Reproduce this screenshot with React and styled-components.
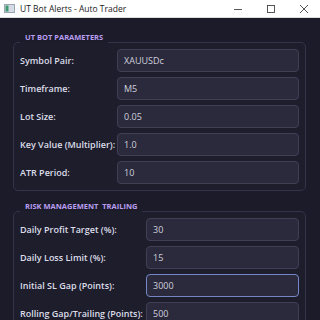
import React from 'react';
import styled, { createGlobalStyle } from 'styled-components';

const GlobalStyles = createGlobalStyle`
  html, body {
    margin: 0;
    padding: 0;
    background: #1c1b29;
  }
  body {
    font-family: 'Open Sans', 'Noto Sans', sans-serif;
    overflow: hidden;
  }
  * {
    box-sizing: border-box;
  }
`;

const Window = styled.div`
  width: 320px;
  height: 320px;
  display: flex;
  flex-direction: column;
  background: #1c1b29;
  overflow: hidden;
`;

const TitleBar = styled.div`
  flex: none;
  height: 18px;
  display: flex;
  align-items: center;
  padding-left: 4px;
  background: #ffffff;
  border-bottom: 1px solid #dcdcdc;
`;

const Title = styled.span`
  margin-left: 5px;
  font-size: 8.5px;
  color: #1b1b1b;
  white-space: nowrap;
`;

const Controls = styled.div`
  margin-left: auto;
  display: flex;
  height: 100%;
`;

const ControlButton = styled.div`
  width: 33px;
  display: flex;
  align-items: center;
  justify-content: center;
`;

const Body = styled.div`
  flex: 1;
  padding: 0 14px 0 13px;
`;

const Group = styled.fieldset`
  margin: ${(p) => p.$top}px 0 0 0;
  padding: 0 6px 6px 6px;
  border: 1px solid #34334a;
  border-radius: 5px;
  background: #1e1d2c;
`;

const Legend = styled.legend`
  padding: 0 5px 9px;
  font-size: 7.5px;
  line-height: 9px;
  font-weight: 700;
  color: #b99ef0;
  text-transform: uppercase;
  white-space: pre;
`;

const Rows = styled.div`
  margin-top: -2px;
  display: grid;
  grid-template-columns: ${(p) => p.$labelWidth}px 1fr;
  grid-auto-rows: 23px;
  column-gap: 4px;
  row-gap: 5px;
  align-items: center;
`;

const Label = styled.label`
  font-size: 9px;
  font-weight: 600;
  color: #dcdde8;
  white-space: nowrap;
`;

const Field = styled.input`
  width: 100%;
  height: 23px;
  padding: 0 6px;
  font-family: inherit;
  font-size: 9px;
  color: #cfd0dc;
  background: #2b2a3c;
  border: 1px solid ${(p) => (p.$focused ? '#7387c8' : '#403f56')};
  border-radius: 4px;
  outline: none;
`;

const utParams = [
  ['Symbol Pair:', 'XAUUSDc'],
  ['Timeframe:', 'M5'],
  ['Lot Size:', '0.05'],
  ['Key Value (Multiplier):', '1.0'],
  ['ATR Period:', '10'],
];

const riskParams = [
  ['Daily Profit Target (%):', '30'],
  ['Daily Loss Limit (%):', '15'],
  ['Initial SL Gap (Points):', '3000', true],
  ['Rolling Gap/Trailing (Points):', '500'],
];

const AppIcon = () => (
  <svg width="11" height="9" viewBox="0 0 11 9">
    <rect x="0.5" y="0.5" width="10" height="8" fill="#d5dbe2" stroke="#9aa6b2" />
    <rect x="1.5" y="1.5" width="3" height="6" fill="#3f9a74" />
  </svg>
);

const App = () => {
  return (
    <>
      <GlobalStyles />
      <Window>
        <TitleBar>
          <AppIcon />
          <Title>UT Bot Alerts - Auto Trader</Title>
          <Controls>
            <ControlButton>
              <svg width="10" height="10" viewBox="0 0 10 10">
                <path d="M1 5.5h8" stroke="#444" strokeWidth="0.9" />
              </svg>
            </ControlButton>
            <ControlButton>
              <svg width="10" height="10" viewBox="0 0 10 10">
                <rect x="1.5" y="1.5" width="7" height="7" fill="none" stroke="#444" strokeWidth="0.9" />
              </svg>
            </ControlButton>
            <ControlButton>
              <svg width="10" height="10" viewBox="0 0 10 10">
                <path d="M1 1l8 8M9 1l-8 8" stroke="#444" strokeWidth="0.9" />
              </svg>
            </ControlButton>
          </Controls>
        </TitleBar>

        <Body>
          <Group $top={15}>
            <Legend>UT Bot Parameters</Legend>
            <Rows $labelWidth={93}>
              {utParams.map(([label, value]) => (
                <React.Fragment key={label}>
                  <Label>{label}</Label>
                  <Field defaultValue={value} />
                </React.Fragment>
              ))}
            </Rows>
          </Group>

          <Group $top={11}>
            <Legend>{'Risk Management  Trailing'}</Legend>
            <Rows $labelWidth={122}>
              {riskParams.map(([label, value, focused]) => (
                <React.Fragment key={label}>
                  <Label>{label}</Label>
                  <Field defaultValue={value} $focused={focused} />
                </React.Fragment>
              ))}
            </Rows>
          </Group>
        </Body>
      </Window>
    </>
  );
};

export default App;
